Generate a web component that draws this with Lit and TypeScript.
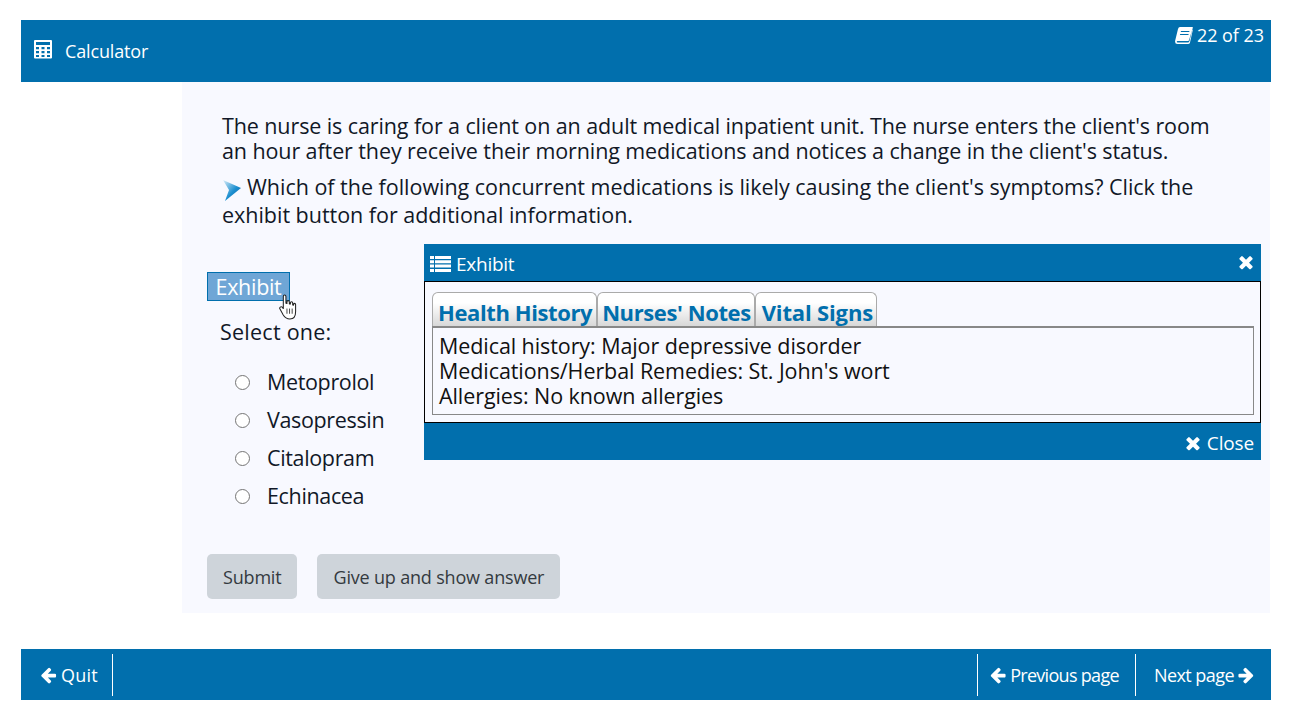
import { LitElement, html, css, svg } from "lit";
import { customElement } from "lit/decorators.js";

const times = svg`<path d="M1298 1322q0 40-28 68l-136 136q-28 28-68 28t-68-28l-294-294-294 294q-28 28-68 28t-68-28l-136-136q-28-28-28-68t28-68l294-294-294-294q-28-28-28-68t28-68l136-136q28-28 68-28t68 28l294 294 294-294q28-28 68-28t68 28l136 136q28 28 28 68t-28 68l-294 294 294 294q28 28 28 68z"/>`;
const arrow = svg`<path d="M1536 896v128q0 53-32.500 90.500t-84.500 37.500h-704l293 294q38 36 38 90t-38 90l-75 76q-38 38-91 38-52 0-90-38l-651-652q-37-37-37-90 0-52 37-91l651-650q38-38 90-38 52 0 91 38l75 74q38 38 38 91t-38 91l-293 293h704q52 0 84.500 37.500t32.500 90.500z"/>`;

@customElement("app-root")
export class AppRoot extends LitElement {
  static styles = css`
    :host { display: block; padding: 20px 23px 20px 21px; font-family: "Open Sans", "Noto Sans", sans-serif; color: #111827; background: #fff; }
    .top { height: 62px; background: #016fad; color: #fff; display: flex; justify-content: space-between; }
    .calc { display: flex; align-items: center; gap: 13px; padding-left: 13px; font-size: 18px; letter-spacing: -0.15px; }
    .count { display: flex; gap: 4px; padding: 3px 7px 0 0; font-size: 18px; letter-spacing: -0.05px; height: 24px; align-items: center; }
    .calc svg, .count svg { fill: #fff; display: block; }
    .calc svg { margin-top: -4px; }
    .main { position: relative; margin-left: 161px; margin-right: 1px; height: 531px; background: #f8f9ff; box-sizing: border-box; padding-top: 31px; }
    .q { margin: 0 0 0 40px; width: 1000px; font-size: 21.5px; letter-spacing: -0.1px; line-height: 25px; }
    .q2 { margin: 10px 0 0 40px; width: 1000px; font-size: 21.5px; letter-spacing: -0.02px; line-height: 28px; }
    .pin { display: inline-block; vertical-align: -6px; margin-right: 5px; }
    .side { margin: 43px 0 0 25px; width: 210px; }
    .ex { display: block; width: 83px; height: 29px; box-sizing: border-box; background: #6fa6d6; border: 1px solid #016fad; color: #fff; font: inherit; font-size: 21.5px; letter-spacing: -0.3px; padding: 0; line-height: 27px; text-align: center; }
    .sel { margin: 17px 0 0 13px; font-size: 21.5px; letter-spacing: 0.25px; line-height: 27px; }
    .opts { margin: 21px 0 0 28px; display: flex; flex-direction: column; gap: 8px; }
    .opt { display: flex; align-items: center; gap: 17px; height: 30px; font-size: 21.5px; letter-spacing: -0.35px; white-space: nowrap; }
    .radio { width: 15px; height: 15px; margin-top: 2px; box-sizing: border-box; border: 1.5px solid #757575; border-radius: 50%; background: #fff; flex: none; }
    .btns { display: flex; gap: 20px; margin: 44px 0 0 25px; }
    .btn { height: 45px; border-radius: 5px; background: #ced4da; color: #343a40; font-size: 18px; letter-spacing: -0.18px; display: flex; align-items: center; padding: 0 16px; }
    .modal { position: absolute; left: 242px; top: 162px; width: 837px; background: #016fad; color: #fff; }
    .mh { height: 37px; display: flex; align-items: center; justify-content: space-between; padding: 2px 6px 0 6px; box-sizing: border-box; font-size: 19px; letter-spacing: -0.25px; }
    .mh span { display: flex; align-items: center; gap: 5px; }
    .mh svg, .mf svg { fill: #fff; display: block; }
    .mh > svg { margin-top: -4px; }
    .mb { background: #f8f9ff; border: 1px solid #000; height: 142px; box-sizing: border-box; padding: 10px 6px 0 7px; color: #111; }
    .tabs { display: flex; height: 34px; }
    .tab { box-sizing: border-box; height: 34px; border: 1px solid #aaa; border-bottom: 0; border-radius: 6px 6px 0 0; background: linear-gradient(#fff 30%, #d8d8d8); font-weight: 700; font-size: 22px; letter-spacing: -0.4px; color: #016fad; padding: 3px 4px 0 5px; line-height: 32px; white-space: nowrap; }
    .tab.t2 { padding: 3px 3px 0 4px; }
    .tab.t3 { padding: 3px 3px 0 6px; letter-spacing: -0.15px; }
    .pane { border: 1px solid #888; border-top-width: 2px; height: 89px; box-sizing: border-box; padding: 5px 6px; font-size: 21.5px; letter-spacing: -0.08px; line-height: 25px; white-space: nowrap; }
    .mf { height: 37px; display: flex; align-items: center; justify-content: flex-end; gap: 5px; padding: 2px 7px 0 0; box-sizing: border-box; font-size: 19px; letter-spacing: -0.15px; }
    .bottom { margin-top: 36px; height: 51px; background: #016fad; color: #fff; display: flex; justify-content: space-between; font-size: 18px; letter-spacing: -0.55px; }
    .nav { display: flex; align-items: center; }
    .item { display: flex; align-items: center; gap: 3px; height: 42px; padding: 0 15px; white-space: nowrap; }
    .item svg { fill: #fff; display: block; }
    .item.b-r { border-right: 1px solid #fff; padding: 0 14px 0 19px; letter-spacing: 0.2px; }
    .item.b-l { border-left: 1px solid #fff; padding: 0 16px 0 12px; letter-spacing: -0.7px; }
    .item.next { padding: 0 17px 0 18px; letter-spacing: -0.55px; }
    .flip { transform: scaleX(-1); }
    .hand { position: absolute; left: 97px; top: 212px; }
  `;
  render() {
    return html`
      <div class="top">
        <div class="calc">
          <svg width="18" height="20" viewBox="0 0 18 20"><path fill-rule="evenodd" d="M1 1h16a1 1 0 0 1 1 1v16.500a1 1 0 0 1-1 1H1a1 1 0 0 1-1-1V2a1 1 0 0 1 1-1zM2 3v3h14V3zM2 8v2.300h3V8zM7.500 8v2.300h3V8zM13 8v2.300h3V8zM2 12v2.300h3V12zM7.500 12v2.300h3V12zM13 12v2.300h3V12zM2 16v2h3v-2zM7.500 16v2h3v-2zM13 16v2h3v-2z"/></svg>
          <span>Calculator</span>
        </div>
        <div class="count">
          <svg width="18" height="17" viewBox="0 0 18 17"><path fill-rule="evenodd" d="M5 0h12.500q.5 0 .3.800L14.500 14q-.4 1.500-2 1.500H2.500C1.500 15.500 1.500 14 2.500 14h10.500q.8 0 1-.7L17.300 2.500 17.800 3 15 15.500q-.4 1.500-2 1.500H2.500Q-.5 17 .2 13.500L3 2Q3.500 0 5 0zM6 4l-.3 1h8.500l.3-1zM5.200 7l-.3 1h8.500l.3-1z"/></svg>
          <span>22 of 23</span>
        </div>
      </div>
      <div class="main">
        <p class="q">The nurse is caring for a client on an adult medical inpatient unit. The nurse enters the client's room an hour after they receive their morning medications and notices a change in the client's status.</p>
        <p class="q2"><svg class="pin" width="20" height="22" viewBox="0 0 20 22"><defs><linearGradient id="g" x1="0" y1="0" x2="1" y2="1"><stop offset="0" stop-color="#dceef9"/><stop offset=".55" stop-color="#1c8fd0"/><stop offset="1" stop-color="#0b5e9c"/></linearGradient></defs><path fill="url(#g)" d="M1 1 19 9 3 22 7 11z"/></svg>Which of the following concurrent medications is likely causing the client's symptoms? Click the exhibit button for additional information.</p>
        <div class="side">
          <button class="ex">Exhibit</button>
          <div class="sel">Select one:</div>
          <div class="opts">
            ${["Metoprolol", "Vasopressin", "Citalopram", "Echinacea"].map(
              (o) => html`<div class="opt"><span class="radio"></span><span>${o}</span></div>`
            )}
          </div>
        </div>
        <div class="btns">
          <div class="btn">Submit</div>
          <div class="btn">Give up and show answer</div>
        </div>
        <svg class="hand" width="18" height="26" viewBox="0 0 17 25"><path fill="#fff" stroke="#222" stroke-width="1" stroke-linejoin="round" d="M4 2.500c0-2 2.500-2 2.500 0V9l1 .2V7.500c0-1.500 2.300-1.500 2.300 0v2l1 .2V8.500c0-1.500 2.200-1.500 2.200 0v2l.8.200V10c0-1.300 2-1.300 2 0v7c0 4-2 7-5.500 7-3.500 0-5-1.500-6.500-4L.8 14.500c-1-1.500 1-3 2.200-1.800L4 14z"/><path stroke="#222" stroke-width=".8" d="M7.500 14v5M10 14v5M12.500 14v5"/></svg>
        <div class="modal">
          <div class="mh">
            <span><svg width="21" height="16" viewBox="0 0 21 16"><path d="M0 0h4v3H0zM5 0h16v3H5zM0 4.300h4v3H0zM5 4.300h16v3H5zM0 8.600h4v3H0zM5 8.600h16v3H5zM0 13h4v3H0zM5 13h16v3H5z"/></svg>Exhibit</span>
            <svg width="18" height="20" viewBox="0 0 1408 1792">${times}</svg>
          </div>
          <div class="mb">
            <div class="tabs">
              <div class="tab">Health History</div>
              <div class="tab t2">Nurses' Notes</div>
              <div class="tab t3">Vital Signs</div>
            </div>
            <div class="pane">Medical history: Major depressive disorder<br />Medications/Herbal Remedies: St. John's wort<br />Allergies: No known allergies</div>
          </div>
          <div class="mf"><svg width="18" height="20" viewBox="0 0 1408 1792">${times}</svg><span>Close</span></div>
        </div>
      </div>
      <div class="bottom">
        <div class="nav">
          <div class="item b-r"><svg width="18" height="18" viewBox="0 0 1664 1792">${arrow}</svg><span>Quit</span></div>
        </div>
        <div class="nav">
          <div class="item b-l"><svg width="17" height="18" viewBox="0 0 1664 1792">${arrow}</svg><span>Previous page</span></div>
          <div class="item b-l next"><span>Next page</span><svg class="flip" width="17" height="18" viewBox="0 0 1664 1792">${arrow}</svg></div>
        </div>
      </div>
    `;
  }
}
